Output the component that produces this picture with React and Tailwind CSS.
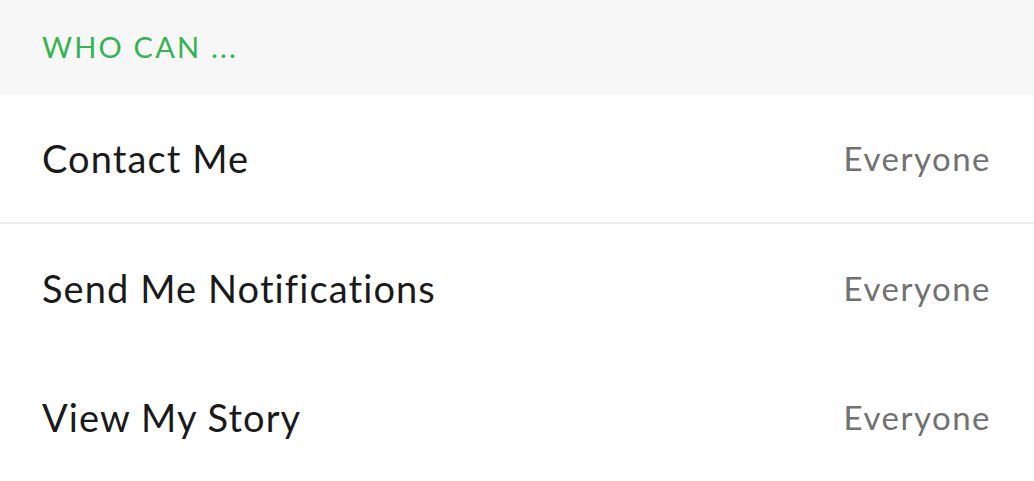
export default function App() {
  const rows = [
    { label: "Contact Me", value: "Everyone", divider: true },
    { label: "Send Me Notifications", value: "Everyone" },
    { label: "View My Story", value: "Everyone" },
  ];

  return (
    <div className="w-[1034px] h-[481px] overflow-hidden bg-white font-['Lato','Noto_Sans',sans-serif] [font-variant-ligatures:none]">
      {/* Section header */}
      <div className="h-[95px] bg-[#f6f7f6] flex items-center pl-[42px] pb-[2px]">
        <span className="text-[29px] text-[#34b352] tracking-[2.2px]">WHO CAN ...</span>
      </div>

      {rows.map(({ label, value, divider }) => (
        <div
          key={label}
          className={
            divider
              ? "h-[129px] flex items-center justify-between pl-[42px] pr-[43px] border-b-2 border-[#ededed]"
              : "h-[129px] flex items-center justify-between pl-[42px] pr-[43px]"
          }
        >
          <span className="text-[38px] text-[#1a1a1a] tracking-[1.1px]">{label}</span>
          <span className="text-[33px] text-[#717171] tracking-[1.5px]">{value}</span>
        </div>
      ))}
    </div>
  );
}
